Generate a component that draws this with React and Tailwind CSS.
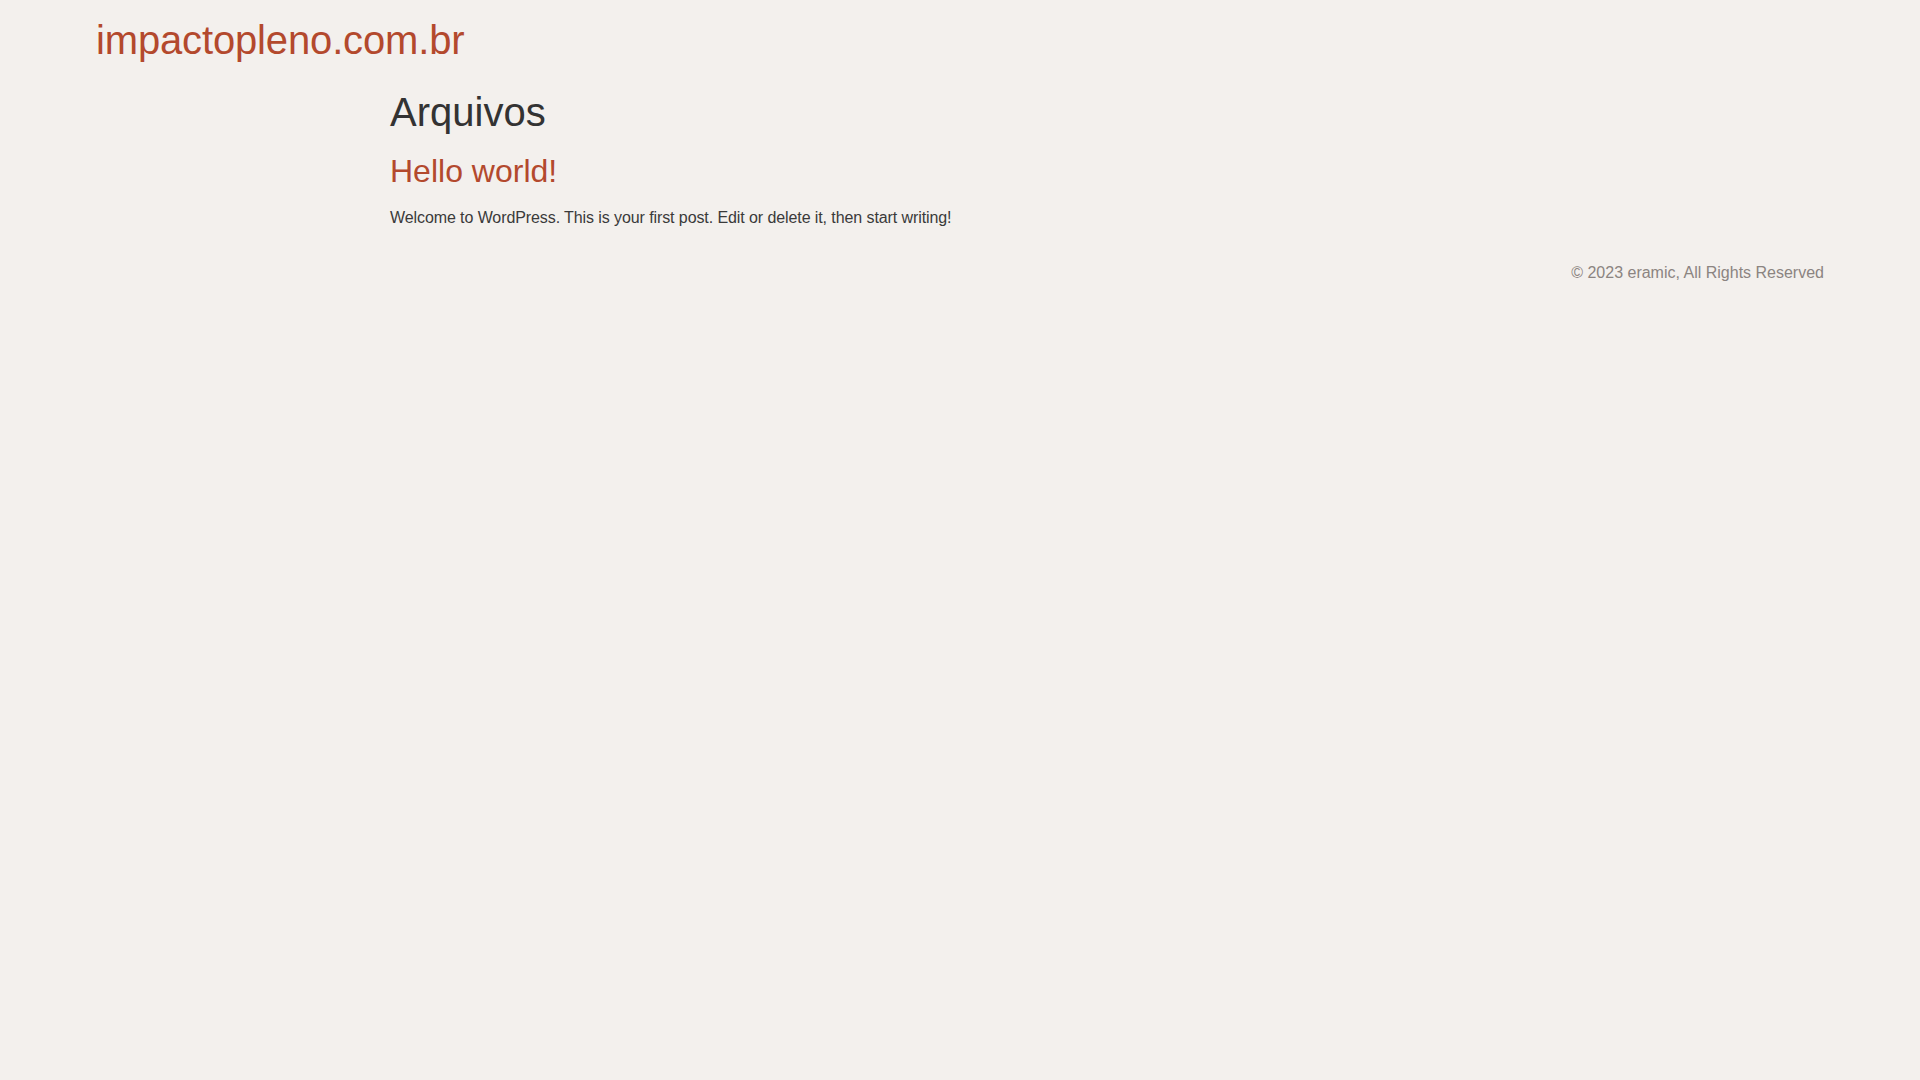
import React from 'react';

const App = () => {
  return (
    <div className="min-h-screen bg-[#f3f0ed] text-[#333333] font-['Liberation_Sans',Arial,sans-serif] text-base leading-normal">
      {/* Header */}
      <header className="px-[96px] py-4">
        <h1 className="m-0 text-[40px] leading-[1.2] font-normal tracking-[-0.15px]">
          <a href="#" className="text-[#b3492d]">impactopleno.com.br</a>
        </h1>
      </header>

      {/* Archive content */}
      <main className="max-w-[1140px] mx-auto">
        <header className="mt-2 mb-4">
          <h1 className="text-[40px] leading-[1.2] font-normal text-[#333333]">Arquivos</h1>
        </header>
        <div>
          <article>
            <h2 className="mb-4 text-[32px] leading-[1.2] font-normal">
              <a href="#" className="text-[#b3492d]">Hello world!</a>
            </h2>
            <p className="mb-[14.4px] tracking-[-0.09px] text-[#3a3a3a]">Welcome to WordPress. This is your first post. Edit or delete it, then start writing!</p>
          </article>
        </div>
      </main>

      {/* Footer */}
      <footer className="px-[96px] py-4 flex justify-end">
        <p className="text-[#8b8481]">© 2023 eramic, All Rights Reserved</p>
      </footer>
    </div>
  );
};

export default App;
